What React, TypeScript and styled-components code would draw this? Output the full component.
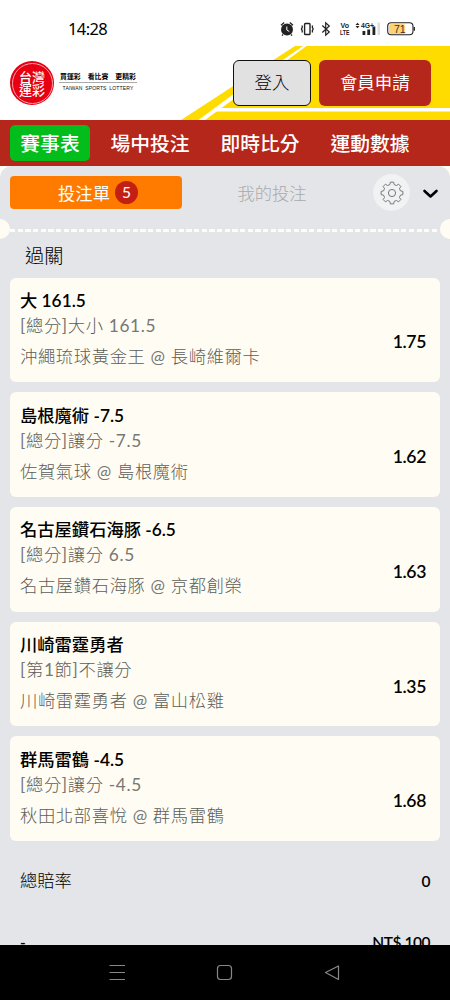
import React from "react";
import styled, { createGlobalStyle } from "styled-components";

const GlobalStyle = createGlobalStyle`
  * { box-sizing: border-box; }
  body { margin: 0; background: #fff; font-family: Lato, "Noto Sans CJK TC", sans-serif; color: #000; }
`;
const Phone = styled.div`
  width: 450px; height: 1000px; display: flex; flex-direction: column; overflow: hidden; background: #fff;
`;
const StatusBar = styled.div`
  height: 46px; flex: none; display: flex; align-items: center; justify-content: space-between;
  padding: 12px 34px 0 68px;
`;
const Clock = styled.span`
  font: 400 16.5px/20px "Noto Sans", sans-serif; letter-spacing: -0.6px;
`;
const Header = styled.header`
  height: 73.5px; flex: none; position: relative; display: flex; align-items: flex-start; padding: 14px 19px 0 10px;
`;
const Stripes = styled.svg`
  position: absolute; left: 0; top: 0;
`;
const Brand = styled.div`
  position: relative; display: flex; align-items: center; flex: 1; gap: 5px;
`;
const Seal = styled.div`
  width: 44px; height: 44px; border-radius: 50%; background: #e60012; display: grid; place-items: center; margin-top: 1px;
`;
const SealRing = styled.div`
  width: 41px; height: 41px; border: 1px solid #f6a5aa; border-radius: 50%; color: #fff;
  font: 500 13px/13px "Noto Sans CJK TC", sans-serif; display: flex; flex-direction: column; align-items: center;
  justify-content: center;
`;
const Slogan = styled.div`
  width: 78px; display: flex; flex-direction: column; align-items: center; margin-top: -2px;
`;
const SloganZh = styled.div`
  width: 100%; display: flex; justify-content: space-between; padding: 0 1px 0 1px; border-bottom: 1px solid #aaa;
  font: 700 6.9px/12px "Noto Sans CJK TC", sans-serif;
`;
const SloganEn = styled.div`
  font: 400 5.1px/10px "Liberation Sans", sans-serif; white-space: nowrap; color: #111; word-spacing: 1.2px; letter-spacing: 0.1px;
`;
const HeaderButton = styled.button<{ $red?: boolean }>`
  position: relative; height: 46px; width: ${(p) => (p.$red ? 112.5 : 78)}px; margin-left: ${(p) => (p.$red ? 7.5 : 0)}px;
  padding: 0 0 1px; border-radius: 6px; border: ${(p) => (p.$red ? "0" : "1.5px solid #111")};
  background: ${(p) => (p.$red ? "#b5261b" : "#e1e1e1")}; color: ${(p) => (p.$red ? "#fff" : "#000")};
  font: ${(p) => (p.$red ? 400 : 300)} 17.4px/24px Lato, "Noto Sans CJK TC", sans-serif;
`;
const Nav = styled.nav`
  height: 46.5px; flex: none; background: #b5261b; display: flex; align-items: flex-start; padding: 5px 10px;
`;
const NavItem = styled.a<{ $active?: boolean }>`
  height: 36px; width: ${(p) => (p.$active ? 80 : 110)}px; border-radius: 5px; color: #fff;
  background: ${(p) => (p.$active ? "#02bd1b" : "transparent")};
  font-size: 19.8px; line-height: 36px; font-weight: 500; text-align: center; white-space: nowrap;
  &:nth-child(2) { margin-left: 5px; }
`;
const SlipBack = styled.main`
  flex: 1; min-height: 0; background: #fffdf3; overflow: hidden;
`;
const Slip = styled.div`
  background: #e4e5e8; border-radius: 12px 12px 0 0; height: 100%; display: flex; flex-direction: column;
`;
const Tabs = styled.div`
  height: 53px; flex: none; display: flex; align-items: center; padding: 0 10px;
  > * { flex: none; }
`;
const ActiveTab = styled.div`
  width: 172px; height: 33px; border-radius: 4px; background: #ff7b00; color: #fff; display: flex;
  align-items: center; justify-content: center; gap: 5px; font-size: 17.3px; padding-left: 4px;
`;
const Count = styled.span`
  width: 23px; height: 23px; border-radius: 50%; background: #c31f13; font-size: 15.5px; line-height: 22px; text-align: center;
`;
const IdleTab = styled.div`
  width: 180px; text-align: center; color: #a9aaac; font-size: 17.3px; font-weight: 300;
`;
const GearButton = styled.div`
  width: 37px; height: 37px; border-radius: 50%; background: #f1f2f4; margin-left: 11px; display: grid; place-items: center;
`;
const Chevron = styled.svg`
  margin-left: 11px;
`;
const Perforation = styled.div`
  height: 20px; flex: none; display: flex; align-items: center; justify-content: space-between;
  &::before, &::after { content: ""; width: 10px; height: 20px; background: #fffdf3; flex: none; }
  &::before { border-radius: 0 10px 10px 0; }
  &::after { border-radius: 10px 0 0 10px; }
`;
const Dashes = styled.div`
  flex: 1; height: 3px; margin-top: 2px; background: repeating-linear-gradient(90deg, #fffdf3 0 5.3px, transparent 5.3px 7.67px);
`;
const SectionTitle = styled.h2`
  margin: 0; height: 38.6px; flex: none; padding: 2px 25px 0; font-size: 19.2px; line-height: 30px; font-weight: 300;
`;
const Bets = styled.div`
  display: flex; flex-direction: column; gap: 10px; padding: 0 10px;
`;
const Card = styled.article`
  height: 104.7px; border-radius: 6px; background: #fffdf3; display: flex; justify-content: space-between; padding: 10.4px 14px 0 10px; white-space: nowrap;
`;
const Latin = styled.span``;
const Pick = styled.div`
  font-size: 17.3px; line-height: 25px; font-weight: 500;
  ${Latin} { font-weight: 600; }
`;
const Market = styled.div`
  font-size: 17.3px; line-height: 26px; color: #5c5c5a; letter-spacing: 0.65px; font-weight: 300;
  ${Latin} { font-weight: 400; color: #777774; }
`;
const Match = styled(Market)`
  line-height: 35px;
`;
const Odds = styled.div`
  font-size: 17.6px; line-height: 24px; font-weight: 600; padding-top: 42.5px; letter-spacing: -0.35px;
`;
const SumRow = styled.div`
  height: 61px; flex: none; display: flex; justify-content: space-between; align-items: center; padding: 0 20px;
  font-size: 17.3px; line-height: 24px; font-weight: 300;
`;
const Totals = styled.div`
  padding-top: 9px;
`;
const Strong = styled.span`
  font-size: 15.5px; font-weight: 600; padding-top: 1px; letter-spacing: -0.45px;
`;
const SystemNav = styled.footer`
  height: 55px; flex: none; background: #000;
`;

const bets = [
  ["大 161.5", "[總分]大小 161.5", "沖繩琉球黃金王 @ 長崎維爾卡", "1.75"],
  ["島根魔術 -7.5", "[總分]讓分 -7.5", "佐賀氣球 @ 島根魔術", "1.62"],
  ["名古屋鑽石海豚 -6.5", "[總分]讓分 6.5", "名古屋鑽石海豚 @ 京都創榮", "1.63"],
  ["川崎雷霆勇者", "[第1節]不讓分", "川崎雷霆勇者 @ 富山松雞", "1.35"],
  ["群馬雷鶴 -4.5", "[總分]讓分 -4.5", "秋田北部喜悅 @ 群馬雷鶴", "1.68"],
];

/* Latin runs carry their own weight beside the Chinese text */
const Mixed = ({ text }: { text: string }) => (
  <>
    {text.split(/([\x20-\x7e]+)/).map((part, i) => (i % 2 ? <Latin key={i}>{part}</Latin> : part))}
  </>
);

const gearPath = (() => {
  const pts: string[] = [];
  for (let i = 0; i < 8; i++) {
    const a = (i * Math.PI) / 4;
    [[-0.25, 8.7], [-0.15, 11], [0.15, 11], [0.25, 8.7]].forEach(([d, r]) =>
      pts.push(`${(12 + r * Math.sin(a + d)).toFixed(2)} ${(12 - r * Math.cos(a + d)).toFixed(2)}`)
    );
  }
  return `M${pts.join("L")}Z`;
})();

const StatusIcons = () => (
  <svg width="136" height="16" viewBox="280 21 136 16" fill="none" stroke="#222" strokeWidth="1.3">
    <circle cx="287" cy="29.5" r="6" fill="#222" stroke="none" />
    <path d="M281 25.2l3.2-2.8M293 25.2l-3.2-2.8M283 34.5l-1 1.2M291 34.5l1 1.2" />
    <path d="M286.8 26.5v3.500l2.500 1.500" stroke="#fff" strokeWidth="1" />
    <rect x="304.6" y="23.5" width="5.4" height="11" rx="0.8" strokeWidth="1.4" />
    <path d="M302.2 25.5v2l-.8 1.5.8 1.5v2M312.4 25.5v2l.8 1.5-.8 1.5v2" strokeWidth="1.3" />
    <path d="M322.3 25.5l7 6.5-3.6 3.2v-12.4l3.600 3.200-7 6.500" strokeWidth="1.2" />
    <g fill="#222" stroke="none" fontFamily="Liberation Sans" fontWeight="700">
      <text x="340.5" y="28" fontSize="7.5" textLength="8.5" lengthAdjust="spacingAndGlyphs">Vo</text>
      <text x="340" y="35" fontSize="8" textLength="9.5" lengthAdjust="spacingAndGlyphs">LTE</text>
      <text x="361" y="27.6" fontSize="7.5" textLength="13" lengthAdjust="spacingAndGlyphs">4G+</text>
      <path d="M355.5 25l2-2.2 2 2.2zM355.5 26l2 2.2 2-2.2z" />
      <rect x="362.5" y="31" width="2.8" height="4" /><rect x="367.3" y="29.5" width="2.8" height="5.5" />
      <rect x="372.5" y="26.5" width="2.8" height="8.5" /><rect x="377.5" y="22.5" width="2.5" height="12.5" fill="#ddd" />
      <rect x="389" y="24" width="16" height="10" rx="2" fill="#ffd276" />
    </g>
    <rect x="387.7" y="22.8" width="25.3" height="12" rx="3.5" strokeWidth="1.1" />
    <path d="M414.3 27v3.8" />
    <text x="394" y="32.8" fontSize="10.5" textLength="11.5" fontFamily="Liberation Sans" fill="#333" stroke="none">71</text>
  </svg>
);

export default function App() {
  return (
    <Phone>
      <GlobalStyle />
      <StatusBar><Clock>14:28</Clock><StatusIcons /></StatusBar>
      <Header>
        <Stripes width="450" height="73.5" viewBox="0 46 450 73.5">
          <path d="M295 46H450V120H181Z" fill="#ffdc00" />
          <path d="M303 46h3.5L205 120h-6.5L233 94.5Z" fill="#fff" />
          <path d="M219 108H450v3.6H214Z" fill="#fff" />
        </Stripes>
        <Brand>
          <Seal><SealRing><span>台灣</span><span>運彩</span></SealRing></Seal>
          <Slogan>
            <SloganZh><span>買運彩</span><span>看比賽</span><span>更精彩</span></SloganZh>
            <SloganEn>TAIWAN SPORTS LOTTERY</SloganEn>
          </Slogan>
        </Brand>
        <HeaderButton>登入</HeaderButton>
        <HeaderButton $red>會員申請</HeaderButton>
      </Header>
      <Nav>
        <NavItem $active>賽事表</NavItem><NavItem>場中投注</NavItem><NavItem>即時比分</NavItem><NavItem>運動數據</NavItem>
      </Nav>
      <SlipBack>
        <Slip>
          <Tabs>
            <ActiveTab>投注單<Count>5</Count></ActiveTab>
            <IdleTab>我的投注</IdleTab>
            <GearButton>
              <svg width="24" height="24" viewBox="0 0 24 24" fill="none" stroke="#777" strokeWidth="1" strokeLinejoin="round">
                <path d={gearPath} /><circle cx="12" cy="12" r="3.6" />
              </svg>
            </GearButton>
            <Chevron width="19" height="12" viewBox="0 0 19 12" fill="none" stroke="#000" strokeWidth="2.6" strokeLinecap="round" strokeLinejoin="round">
              <path d="M3.5 4l6 5.5 6-5.5" />
            </Chevron>
          </Tabs>
          <Perforation><Dashes /></Perforation>
          <SectionTitle>過關</SectionTitle>
          <Bets>
            {bets.map(([pick, market, match, odds]) => (
              <Card key={pick}>
                <div>
                  <Pick><Mixed text={pick} /></Pick>
                  <Market><Mixed text={market} /></Market>
                  <Match><Mixed text={match} /></Match>
                </div>
                <Odds>{odds}</Odds>
              </Card>
            ))}
          </Bets>
          <Totals>
            <SumRow><span>總賠率</span><Strong>0</Strong></SumRow>
            <SumRow><Strong>-</Strong><Strong>NT$ 100</Strong></SumRow>
          </Totals>
        </Slip>
      </SlipBack>
      <SystemNav>
        <svg width="450" height="55" viewBox="0 945 450 55" fill="none" stroke="#888" strokeWidth="1.2" strokeLinejoin="round">
          <path d="M109.5 965.5h15.5M109.5 972.5h15.5M109.5 979.5h15.5" />
          <rect x="217.5" y="965.5" width="14" height="14" rx="3" />
          <path d="M338.5 966v13.5L325.5 972.5Z" />
        </svg>
      </SystemNav>
    </Phone>
  );
}
